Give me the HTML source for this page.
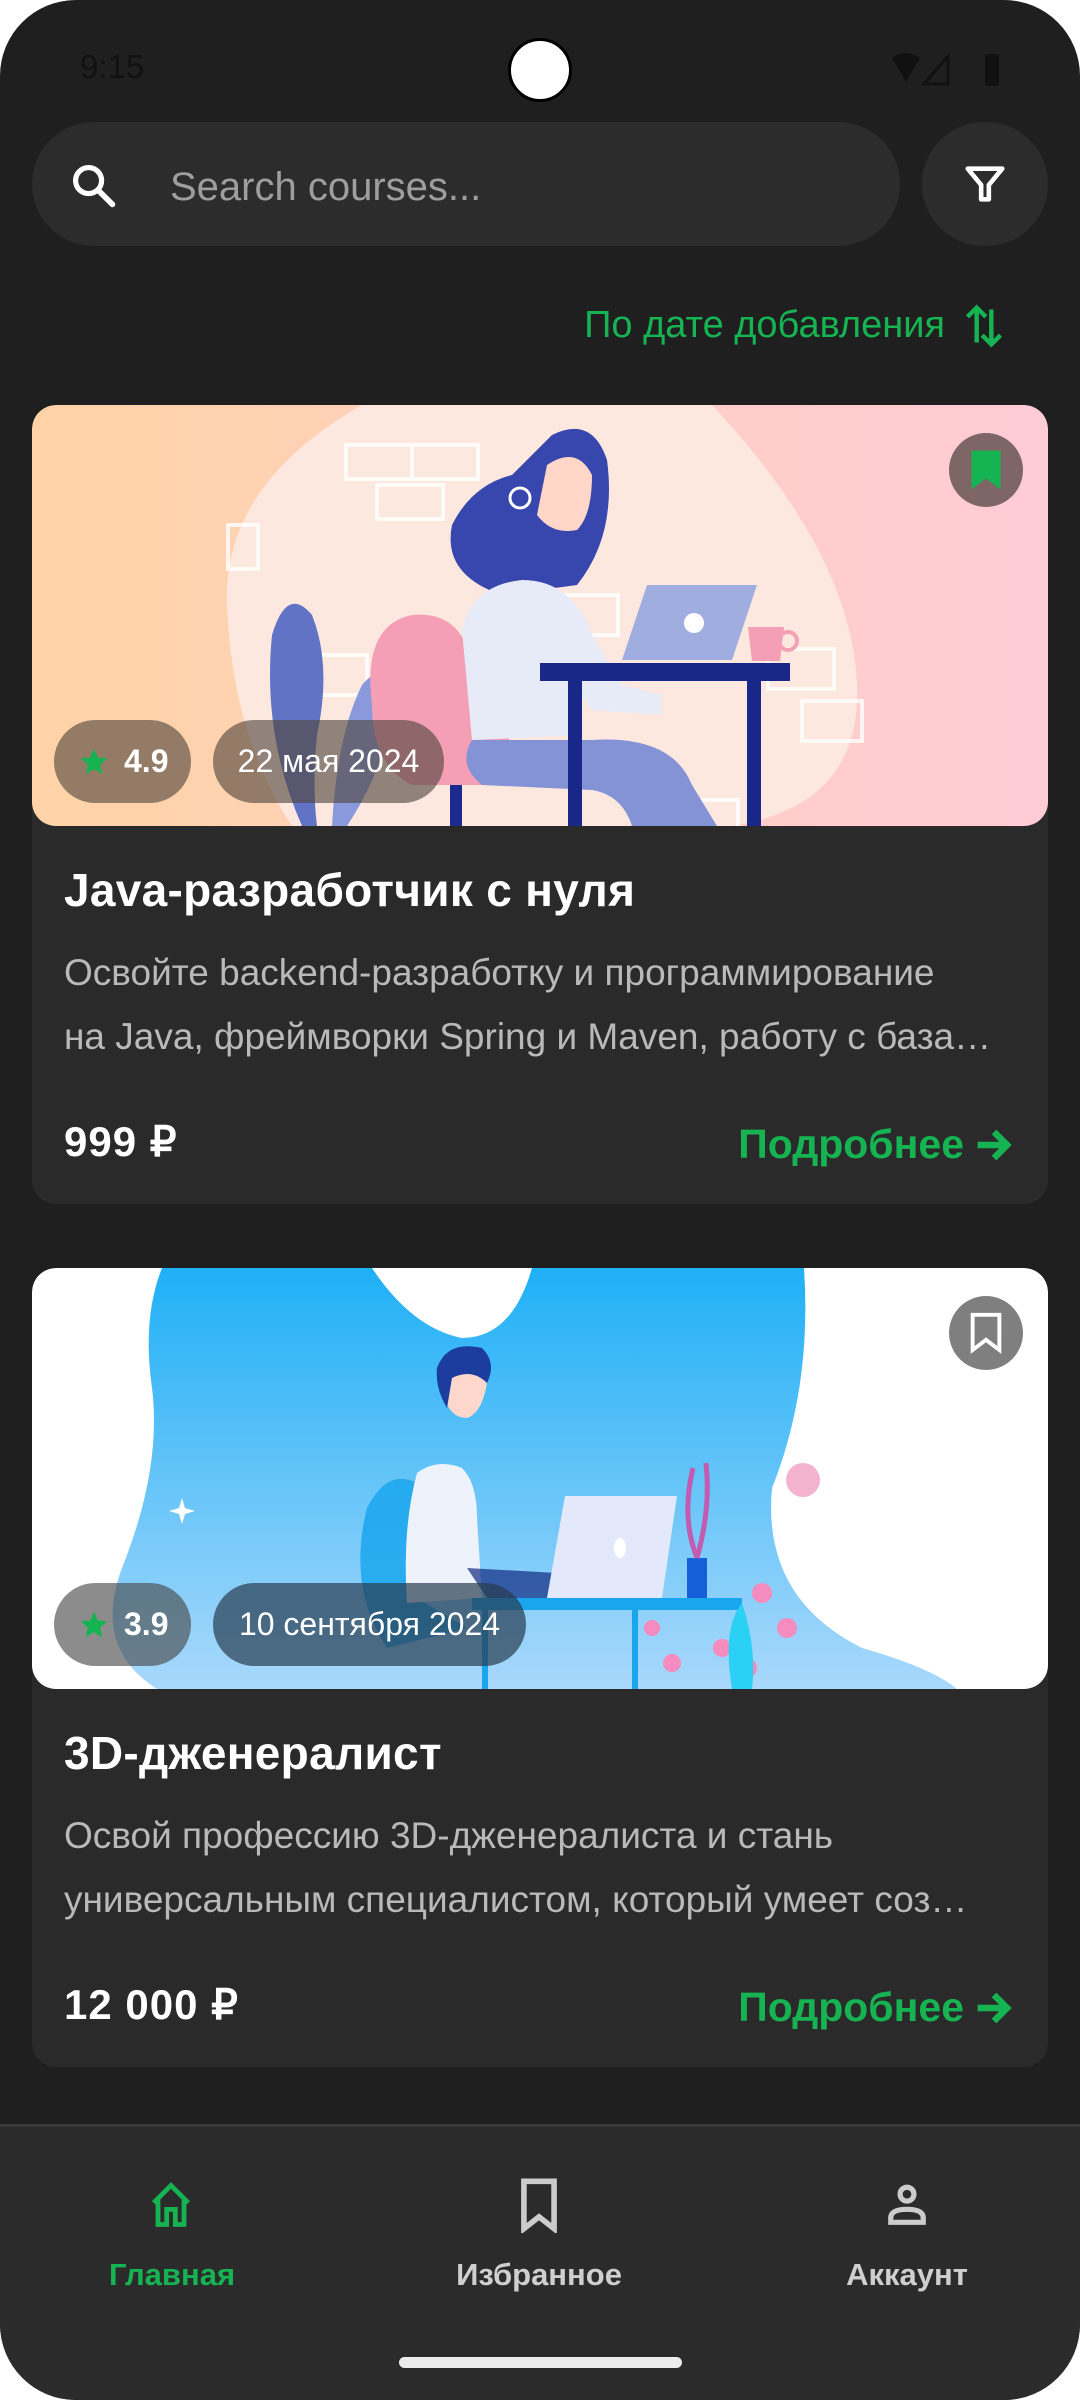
<!DOCTYPE html>
<html><head><meta charset="utf-8">
<style>
*{margin:0;padding:0;box-sizing:border-box}
html,body{width:1080px;height:2400px;background:#fff;overflow:hidden}
body{font-family:"Liberation Sans",sans-serif}
.screen{position:absolute;left:0;top:0;width:1080px;height:2400px;background:#1f1f1f;border-radius:76px;overflow:hidden}
.abs{position:absolute}
.search{left:32px;top:122px;width:868px;height:124px;border-radius:62px;background:#2c2c2c}
.filter{left:922px;top:122px;width:126px;height:124px;border-radius:62px;background:#2c2c2c}
.card{position:absolute;left:32px;width:1016px;height:799px;border-radius:24px;background:#2a2a2a;overflow:hidden}
.img{position:absolute;left:0;top:0;width:1016px;height:421px;border-radius:24px;overflow:hidden}
.chip{position:absolute;top:315px;height:83px;border-radius:42px;color:#fff;font-size:32px;display:flex;align-items:center}
.title{position:absolute;left:32px;top:458px;color:#fff;font-weight:bold;font-size:46px;letter-spacing:0.3px}
.desc{position:absolute;left:32px;top:536px;width:965px;color:#b9b9b9;font-size:37px;line-height:64px;white-space:nowrap;overflow:hidden}
.price{position:absolute;left:32px;top:712px;color:#fff;font-weight:bold;font-size:42px;letter-spacing:1px}
.more{position:absolute;right:34px;top:716px;color:#16b352;font-size:41px;font-weight:bold;display:flex;align-items:center;gap:10px}
.bm{position:absolute;left:917px;top:28px;width:74px;height:74px;border-radius:50%;display:flex;align-items:center;justify-content:center}
.nav{left:0;top:2124px;width:1080px;height:276px;background:#2b2b2b;border-top:3px solid #3a3a3a}
.lbl{position:absolute;top:130px;font-size:31px;font-weight:bold;transform:translateX(-50%);white-space:nowrap}
</style></head><body>
<div class="screen">
  <div class="abs" style="left:80px;top:48px;font-size:33px;color:#111">9:15</div>
  <div class="abs" style="left:508px;top:38px;width:64px;height:64px;border-radius:50%;background:#fff;border:3px solid #000"></div>
  <svg class="abs" style="left:890px;top:50px" width="120" height="40" viewBox="0 0 120 40">
    <path d="M2 8 Q16 -2 30 8 L16 32 Z" fill="#111"/>
    <path d="M34 34 L58 6 L58 34 Z" fill="none" stroke="#111" stroke-width="3"/>
    <rect x="95" y="4" width="14" height="32" rx="2" fill="#111"/>
  </svg>

  <div class="abs search">
    <svg class="abs" style="left:36px;top:38px" width="52" height="52" viewBox="0 0 24 24"><circle cx="9.5" cy="9.5" r="6" fill="none" stroke="#fff" stroke-width="2.4"/><path d="M14 14 L20.5 20.5" stroke="#fff" stroke-width="2.6" stroke-linecap="round"/></svg>
    <div class="abs" style="left:138px;top:43px;font-size:40px;color:#9e9e9e">Search courses...</div>
  </div>
  <div class="abs filter">
    <svg class="abs" style="left:40px;top:39px" width="46" height="46" viewBox="0 0 24 24"><path d="M3 4 H21 L14 12.5 V20 H10 V12.5 Z" fill="none" stroke="#fff" stroke-width="2.4" stroke-linejoin="round"/></svg>
  </div>

  <div class="abs" style="right:135px;top:304px;font-size:38px;color:#16b352;white-space:nowrap">По дате добавления</div>
  <svg class="abs" style="left:962px;top:302px" width="44" height="48" viewBox="0 0 24 26"><path d="M8 22 V3 M3 8 L8 3 L13 8" fill="none" stroke="#16b352" stroke-width="2.4"/><path d="M16 4 V23 M11 18 L16 23 L21 18" fill="none" stroke="#16b352" stroke-width="2.4"/></svg>

  <div class="card" style="top:405px">
    <div class="img">
      <svg width="1016" height="421" viewBox="0 0 1016 421">
        <defs><linearGradient id="g1" x1="0" x2="1"><stop offset="0" stop-color="#ffd3a6"/><stop offset="0.6" stop-color="#ffcfc6"/><stop offset="1" stop-color="#ffcbd6"/></linearGradient></defs>
        <rect width="1016" height="421" fill="url(#g1)"/>
        <path d="M330 0 L680 0 Q820 150 825 280 Q830 400 700 421 L260 421 Q200 330 195 200 Q190 80 330 0Z" fill="#fde8e0"/>
        <g fill="none" stroke="#fff" stroke-width="4" opacity=".8">
          <rect x="314" y="40" width="66" height="34"/><rect x="380" y="40" width="66" height="34"/><rect x="345" y="80" width="66" height="34"/>
          <rect x="196" y="120" width="30" height="44"/><rect x="520" y="190" width="66" height="40"/><rect x="736" y="244" width="66" height="40"/><rect x="770" y="296" width="60" height="40"/><rect x="640" y="395" width="66" height="40"/><rect x="275" y="250" width="60" height="40"/>
        </g>
        <path d="M270 421 Q230 330 240 230 Q255 180 280 210 Q300 260 285 330 Q280 380 285 421Z" fill="#6173c4"/>
        <path d="M300 421 Q305 330 330 280 Q355 250 360 300 Q355 360 315 421Z" fill="#8a98dc"/>
        <path d="M340 300 Q330 220 380 210 Q430 205 440 260 L500 380 L380 380 Q340 360 340 300Z" fill="#f49fb6"/>
        <rect x="418" y="380" width="12" height="41" fill="#1b2a8c"/>
        <path d="M520 30 Q560 10 575 55 Q585 130 545 180 L470 190 Q410 170 420 120 Q440 80 480 70 Z" fill="#3747ad"/>
        <path d="M515 60 Q545 40 560 70 Q560 110 545 125 Q520 130 505 110 Z" fill="#ffd6c8"/>
        <circle cx="488" cy="93" r="10" fill="none" stroke="#fff" stroke-width="3"/>
        <path d="M430 225 Q440 180 490 175 Q540 175 560 230 L590 280 L630 290 L630 310 L560 305 L540 275 L550 330 L440 335 Z" fill="#e6ebf7"/>
        <path d="M440 335 L560 335 Q640 330 660 380 L685 421 L600 421 Q590 390 560 385 L450 380 Q425 360 440 335Z" fill="#8493d6"/>
        <path d="M615 180 L725 180 L700 255 L590 255 Z" fill="#a0addf"/>
        <circle cx="662" cy="218" r="10" fill="#fff"/>
        <rect x="508" y="258" width="250" height="18" fill="#192788"/>
        <rect x="536" y="276" width="14" height="145" fill="#192788"/>
        <rect x="715" y="276" width="14" height="145" fill="#192788"/>
        <path d="M716 222 L752 222 L748 256 L720 256Z" fill="#f49fb6"/><circle cx="756" cy="236" r="9" fill="none" stroke="#f49fb6" stroke-width="4"/>
      </svg>
      <div class="chip" style="left:22px;width:137px;background:rgba(80,70,60,.62)">
        <svg style="margin-left:24px" width="32" height="32" viewBox="0 0 24 24"><path d="M12 2 L14.9 8.6 L22 9.2 L16.6 14 L18.2 21 L12 17.3 L5.8 21 L7.4 14 L2 9.2 L9.1 8.6Z" fill="#16b352"/></svg>
        <b style="margin-left:14px">4.9</b></div>
      <div class="chip" style="left:181px;width:231px;background:rgba(80,70,60,.62);justify-content:center">22 мая 2024</div>
      <div class="bm" style="background:#7d6665">
        <svg width="34" height="44" viewBox="0 0 14 18"><path d="M1 1 H13 V17 L7 12.5 L1 17Z" fill="#16b352"/></svg>
      </div>
    </div>
    <div class="title">Java-разработчик с нуля</div>
    <div class="desc">Освойте backend-разработку и программирование<br>на Java, фреймворки Spring и Maven, работу с база…</div>
    <div class="price">999 ₽</div>
    <div class="more">Подробнее <svg width="40" height="36" viewBox="0 0 24 22"><path d="M2 11 H20 M12 3 L20 11 L12 19" fill="none" stroke="#16b352" stroke-width="4"/></svg></div>
  </div>

  <div class="card" style="top:1268px">
    <div class="img">
      <svg width="1016" height="421" viewBox="0 0 1016 421">
        <defs><linearGradient id="g2" x1="0" y1="0" x2="0" y2="1"><stop offset="0" stop-color="#1fb0f6"/><stop offset="1" stop-color="#a9d8fb"/></linearGradient></defs>
        <rect width="1016" height="421" fill="#fff"/>
        <path d="M130 0 L340 0 Q380 60 430 70 Q480 70 500 0 L772 0 Q780 120 740 220 Q730 330 830 380 Q900 400 925 421 L125 421 Q60 380 90 300 Q130 200 120 120 Q110 50 130 0Z" fill="url(#g2)"/>
        <circle cx="771" cy="212" r="17" fill="#f3b3cf"/>
        <path d="M150 230 L153 240 L163 243 L153 246 L150 256 L147 246 L137 243 L147 240Z" fill="#fff"/>
        <g transform="translate(55,0)">
        <path d="M280 240 Q300 200 330 215 Q340 280 330 330 L380 360 L300 380 Q260 320 280 240Z" fill="#1aa6ee" opacity=".85"/>
        <path d="M330 205 Q350 190 375 200 Q390 215 390 250 L395 330 L320 335 Q315 260 330 205Z" fill="#eef3fb"/>
        <path d="M360 90 Q395 85 400 115 Q395 145 380 150 Q360 150 355 120Z" fill="#fdd7cc"/>
        <path d="M350 100 Q360 72 395 80 Q410 95 400 115 Q385 100 365 110 L360 140 Q348 120 350 100Z" fill="#1c3d9e"/>
        <path d="M380 300 L470 305 L470 335 L400 330Z" fill="#102a80" opacity=".7"/>
        <path d="M478 228 L590 228 L575 330 L460 330Z" fill="#e3e9fa"/>
        <ellipse cx="533" cy="280" rx="6" ry="10" fill="#fff"/>
        <rect x="385" y="330" width="270" height="12" fill="#1aa6ee"/>
        <rect x="395" y="342" width="6" height="79" fill="#1aa6ee"/><rect x="545" y="342" width="6" height="79" fill="#1aa6ee"/>
        <rect x="600" y="290" width="20" height="40" fill="#1560d8"/>
        <path d="M610 290 Q594 250 606 200 M610 290 Q624 240 619 195" stroke="#c35bb0" stroke-width="5" fill="none"/>
        </g>
        <g fill="#f58cc0"><circle cx="730" cy="325" r="10"/><circle cx="755" cy="360" r="10"/><circle cx="690" cy="380" r="9"/><circle cx="715" cy="400" r="10"/><circle cx="620" cy="360" r="8"/><circle cx="640" cy="395" r="9"/></g>
        <path d="M700 421 Q690 360 710 335 Q725 380 720 421Z" fill="#2bd0f5"/>
      </svg>
      <div class="chip" style="left:22px;width:137px;background:rgba(70,70,70,.62)">
        <svg style="margin-left:24px" width="32" height="32" viewBox="0 0 24 24"><path d="M12 2 L14.9 8.6 L22 9.2 L16.6 14 L18.2 21 L12 17.3 L5.8 21 L7.4 14 L2 9.2 L9.1 8.6Z" fill="#16b352"/></svg>
        <b style="margin-left:14px">3.9</b></div>
      <div class="chip" style="left:181px;width:313px;background:rgba(40,60,80,.7);justify-content:center">10 сентября 2024</div>
      <div class="bm" style="background:#7f7f7f">
        <svg width="34" height="44" viewBox="0 0 14 18"><path d="M1.5 1.5 H12.5 V16 L7 11.8 L1.5 16Z" fill="none" stroke="#fff" stroke-width="1.6"/></svg>
      </div>
    </div>
    <div class="title">3D-дженералист</div>
    <div class="desc">Освой профессию 3D-дженералиста и стань<br>универсальным специалистом, который умеет соз…</div>
    <div class="price">12 000 ₽</div>
    <div class="more">Подробнее <svg width="40" height="36" viewBox="0 0 24 22"><path d="M2 11 H20 M12 3 L20 11 L12 19" fill="none" stroke="#16b352" stroke-width="4"/></svg></div>
  </div>

  <div class="abs nav">
    <svg class="abs" style="left:145px;top:52px" width="52" height="52" viewBox="0 0 24 24"><path d="M4 11 L12 3 L20 11 M6 9 V21 H10 V14 H14 V21 H18 V9" fill="none" stroke="#16b352" stroke-width="2.2"/></svg>
    <div class="lbl" style="left:172px;color:#16b352">Главная</div>
    <svg class="abs" style="left:513px;top:50px" width="52" height="56" viewBox="0 0 24 26"><path d="M5 2 H19 V24 L12 18.5 L5 24Z" fill="none" stroke="#ccc" stroke-width="2.6"/></svg>
    <div class="lbl" style="left:539px;color:#cfcfcf">Избранное</div>
    <svg class="abs" style="left:881px;top:52px" width="52" height="52" viewBox="0 0 24 24"><circle cx="12" cy="7" r="3.2" fill="none" stroke="#ccc" stroke-width="2.4"/><path d="M4.5 20 V18 Q4.5 14 12 14 Q19.5 14 19.5 18 V20Z" fill="none" stroke="#ccc" stroke-width="2.4"/></svg>
    <div class="lbl" style="left:907px;color:#cfcfcf">Аккаунт</div>
    <div class="abs" style="left:399px;top:230px;width:283px;height:11px;border-radius:6px;background:#ececec"></div>
  </div>
</div>
</body></html>
